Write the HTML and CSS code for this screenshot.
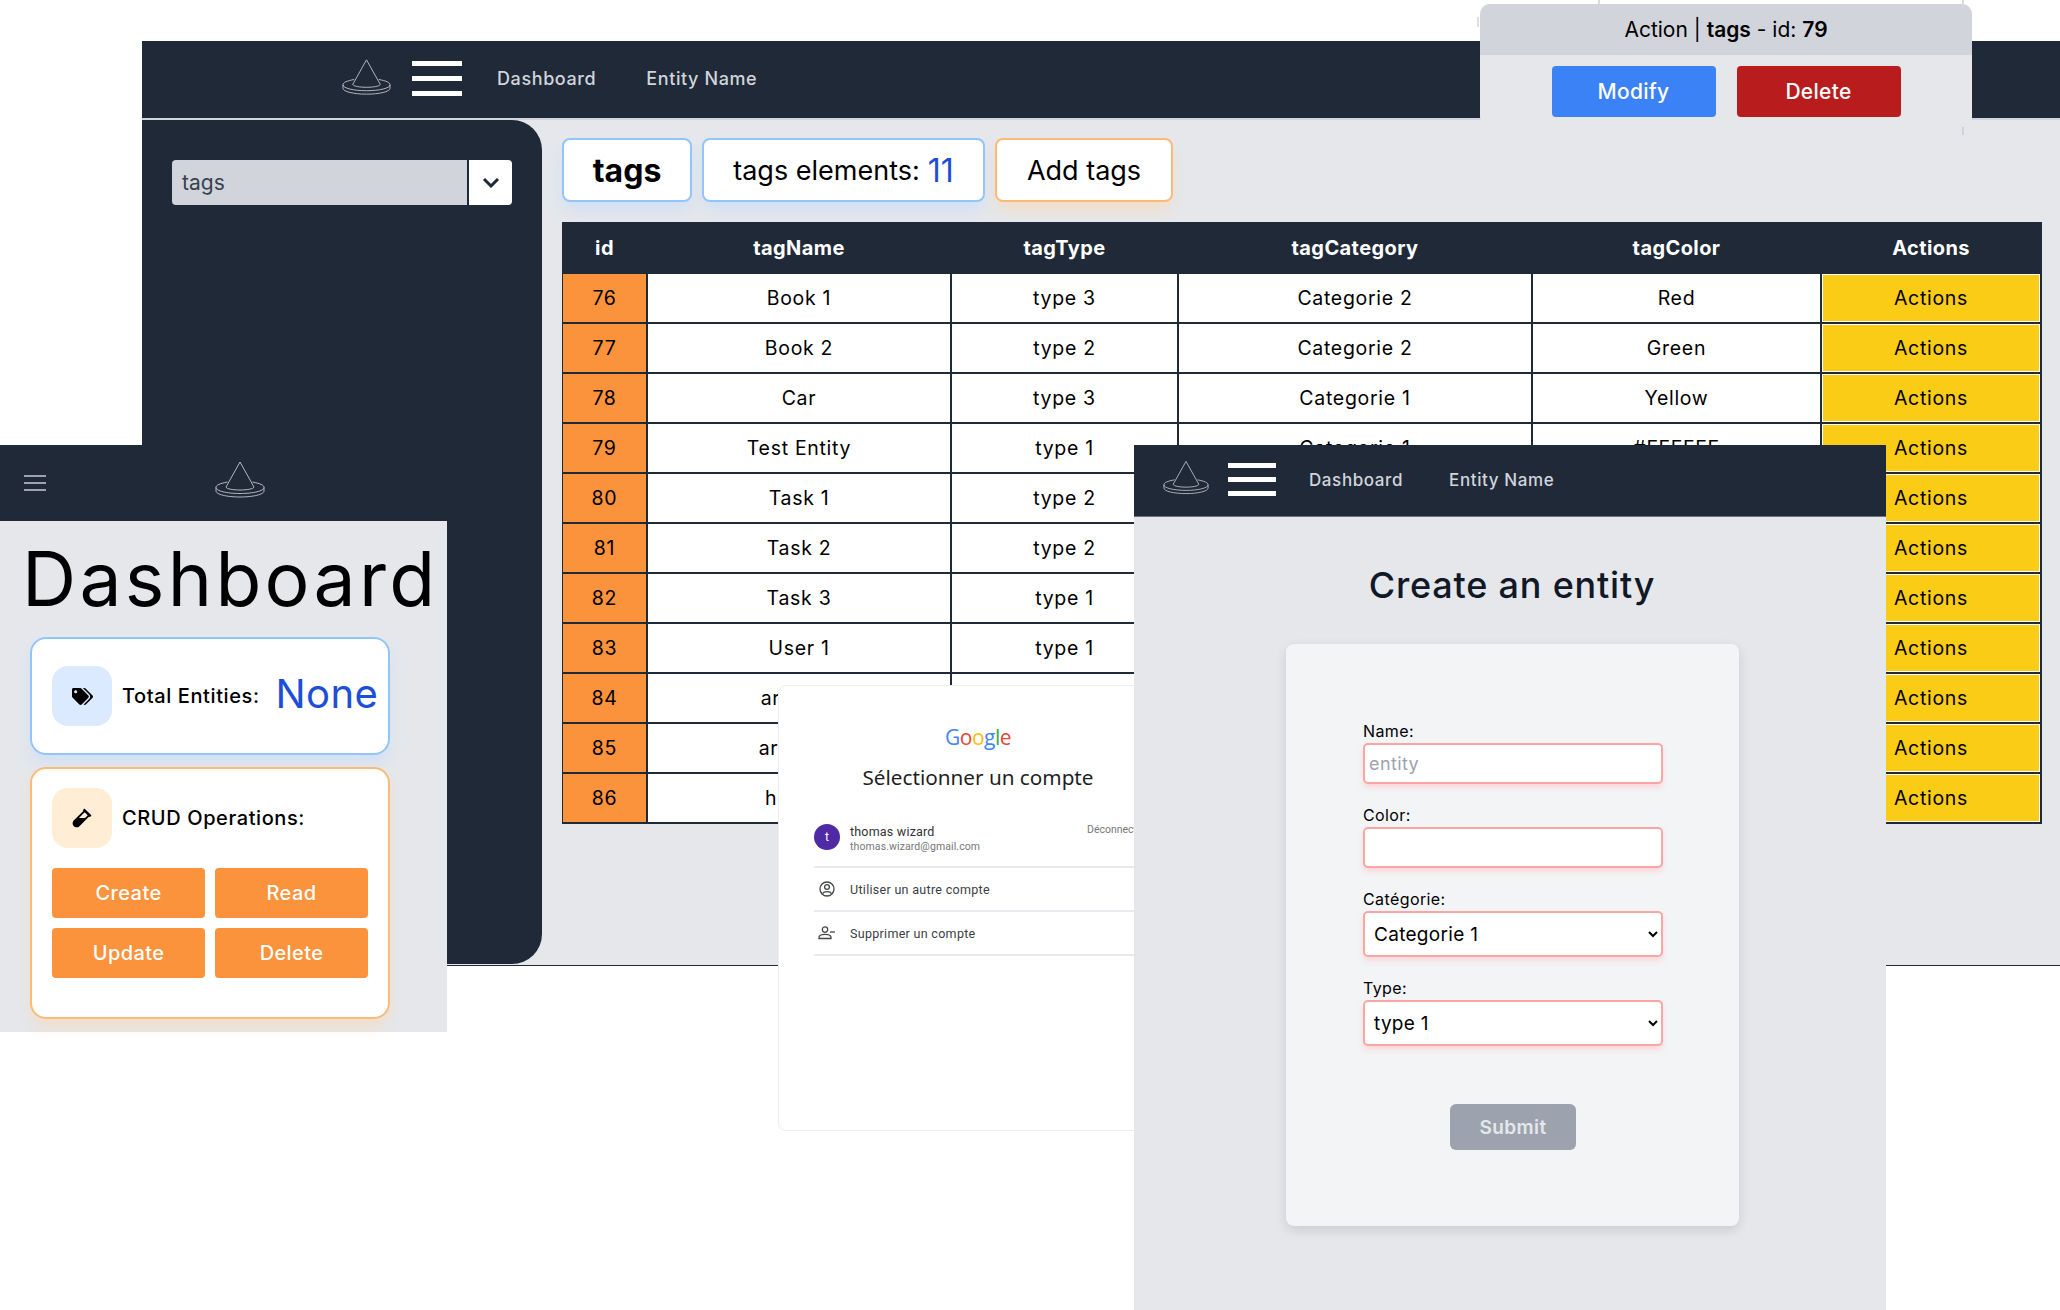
FILE: index.html
```html
<!DOCTYPE html>
<html lang="en">
<head>
<meta charset="UTF-8">
<title>Entity Manager</title>
<link rel="stylesheet" href="styles.css">
</head>
<body>
<svg class="defs" width="0" height="0">
  <symbol id="hat" viewBox="0 0 50 37">
    <g fill="none" stroke="currentColor" stroke-width="0.9">
      <path d="M25 1 L11 26 C12 30 38 30 39 26 Z"/>
      <path d="M12.5 21 C5 22.5 1 24 1 26.5 C1 30 12 32.5 25 32.5 C38 32.5 49 30 49 26.5 C49 24 45 22.5 37.5 21"/>
      <path d="M1 26.5 L1 30 C1 33.5 12 36 25 36 C38 36 49 33.5 49 30 L49 26.5"/>
    </g>
  </symbol>
</svg>

<div class="desk">

  <!-- main table page -->
  <div class="win win-main">
    <div class="nav nav-main">
      <svg class="logo logo-main"><use href="#hat"/></svg>
      <div class="burger burger-main"><span></span><span></span><span></span></div>
      <a class="nav-link nav-link-main">Dashboard</a>
      <a class="nav-link nav-link-main">Entity Name</a>
    </div>
    <div class="main-body">
      <div class="sidebar">
        <div class="side-select">
          <div class="side-select-text">tags</div>
          <div class="side-select-btn">
            <svg width="18" height="11" viewBox="0 0 18 11"><path d="M2 2 L9 9 L16 2" fill="none" stroke="#1f2937" stroke-width="3"/></svg>
          </div>
        </div>
      </div>
      <div class="content">
        <div class="tag-row">
          <div class="pill pill-blue pill-title">tags</div>
          <div class="pill pill-blue pill-count">tags elements: <span class="blue-num">11</span></div>
          <div class="pill pill-orange pill-add">Add tags</div>
        </div>
        <table class="data">
          <thead>
            <tr><th class="c-id">id</th><th class="c-name">tagName</th><th class="c-type">tagType</th><th class="c-cat">tagCategory</th><th class="c-color">tagColor</th><th class="c-act">Actions</th></tr>
          </thead>
          <tbody>
            <tr><td class="id">76</td><td>Book 1</td><td>type 3</td><td>Categorie 2</td><td>Red</td><td class="act">Actions</td></tr>
            <tr><td class="id">77</td><td>Book 2</td><td>type 2</td><td>Categorie 2</td><td>Green</td><td class="act">Actions</td></tr>
            <tr><td class="id">78</td><td>Car</td><td>type 3</td><td>Categorie 1</td><td>Yellow</td><td class="act">Actions</td></tr>
            <tr><td class="id">79</td><td>Test Entity</td><td>type 1</td><td>Categorie 1</td><td>#FFFFFF</td><td class="act">Actions</td></tr>
            <tr><td class="id">80</td><td>Task 1</td><td>type 2</td><td>Categorie 1</td><td>Red</td><td class="act">Actions</td></tr>
            <tr><td class="id">81</td><td>Task 2</td><td>type 2</td><td>Categorie 2</td><td>Green</td><td class="act">Actions</td></tr>
            <tr><td class="id">82</td><td>Task 3</td><td>type 1</td><td>Categorie 2</td><td>Yellow</td><td class="act">Actions</td></tr>
            <tr><td class="id">83</td><td>User 1</td><td>type 1</td><td>Categorie 1</td><td>Red</td><td class="act">Actions</td></tr>
            <tr><td class="id">84</td><td>article 1</td><td>type 1</td><td>Categorie 1</td><td>Red</td><td class="act">Actions</td></tr>
            <tr><td class="id">85</td><td>article 2</td><td>type 1</td><td>Categorie 1</td><td>Red</td><td class="act">Actions</td></tr>
            <tr><td class="id">86</td><td>hotel 3</td><td>type 1</td><td>Categorie 1</td><td>Red</td><td class="act">Actions</td></tr>
          </tbody>
        </table>
      </div>
    </div>
  </div>

  <!-- action popup -->
  <div class="win win-popup">
    <div class="popup-head">Action | <b>tags</b> - id: <b>79</b></div>
    <div class="popup-btns">
      <button class="popup-btn btn-blue">Modify</button>
      <button class="popup-btn btn-red">Delete</button>
    </div>
  </div>
  <span class="tick tick-a"></span>
  <span class="tick tick-b"></span>
  <span class="tick tick-c"></span>
  <span class="tick tick-d"></span>

  <!-- mobile dashboard -->
  <div class="win win-mobile">
    <div class="nav nav-mobile">
      <div class="burger burger-small"><span></span><span></span><span></span></div>
      <svg class="logo logo-mobile"><use href="#hat"/></svg>
    </div>
    <h1 class="dash-title">Dashboard</h1>
    <div class="card card-blue">
      <div class="card-line">
        <div class="icon-box icon-blue">
          <svg width="21" height="17" viewBox="0 0 640 512"><path d="M497.941 225.941L286.059 14.059A48 48 0 0 0 252.118 0H48C21.49 0 0 21.49 0 48v204.118a48 48 0 0 0 14.059 33.941l211.882 211.882c18.744 18.745 49.136 18.746 67.882 0l204.118-204.118c18.745-18.745 18.745-49.137 0-67.882zM112 160c-26.51 0-48-21.49-48-48s21.49-48 48-48 48 21.49 48 48-21.49 48-48 48zm513.941 133.823L421.823 497.941c-18.745 18.745-49.137 18.745-67.882 0l-.36-.36L527.64 323.522c16.999-16.999 26.36-39.6 26.36-63.64s-9.362-46.641-26.36-63.64L331.397 0h48.721a48 48 0 0 1 33.941 14.059l211.882 211.882c18.745 18.745 18.745 49.137 0 67.882z"/></svg>
        </div>
        <span class="card-label">Total Entities:</span>
        <span class="card-none">None</span>
      </div>
    </div>
    <div class="card card-orange">
      <div class="card-line">
        <div class="icon-box icon-orange">
          <svg width="20" height="20" viewBox="0 0 480 512"><path d="M477.7 186.1L309.5 18.3c-3.1-3.1-8.2-3.1-11.3 0l-34 33.9c-3.1 3.1-3.1 8.2 0 11.3l11.2 11.1L33 316.5c-38.8 38.7-45.1 102-9.4 143.5 20.6 24 49.5 36 78.4 35.9 26.4 0 52.8-10 72.9-30.1l246.3-245.7 11.2 11.1c3.1 3.1 8.2 3.1 11.3 0l34-33.9c3-3 3-8.1-.1-11.2zM318 256H161l148-147.7 78.5 78.3L318 256z"/></svg>
        </div>
        <span class="card-label">CRUD Operations:</span>
      </div>
      <div class="crud-grid">
        <button class="crud-btn">Create</button>
        <button class="crud-btn">Read</button>
        <button class="crud-btn">Update</button>
        <button class="crud-btn">Delete</button>
      </div>
    </div>
  </div>

  <!-- google account picker -->
  <div class="win win-google">
    <div class="g-logo"><span class="g-b">G</span><span class="g-r">o</span><span class="g-y">o</span><span class="g-b">g</span><span class="g-g">l</span><span class="g-r">e</span></div>
    <div class="g-title">Sélectionner un compte</div>
    <div class="g-list">
      <div class="g-row g-row-user">
        <div class="g-avatar">t</div>
        <div class="g-user">
          <div class="g-name">thomas wizard</div>
          <div class="g-mail">thomas.wizard@gmail.com</div>
        </div>
        <div class="g-out">Déconnecté</div>
      </div>
      <div class="g-row">
        <svg class="g-icon" width="16" height="16" viewBox="0 0 16 16"><g fill="none" stroke="#444746" stroke-width="1.3"><circle cx="8" cy="8" r="7"/><circle cx="8" cy="6" r="2.4"/><path d="M3.4 12.6 C5 10 11 10 12.6 12.6"/></g></svg>
        <span class="g-text">Utiliser un autre compte</span>
      </div>
      <div class="g-row">
        <svg class="g-icon" width="18" height="14" viewBox="0 0 18 14"><g fill="none" stroke="#444746" stroke-width="1.3"><circle cx="7" cy="3.6" r="2.7"/><path d="M1 12.5 V11.5 C1 9 4 8.4 7 8.4 C10 8.4 13 9 13 11.5 V12.5 Z"/><path d="M12 6 H17"/></g></svg>
        <span class="g-text">Supprimer un compte</span>
      </div>
    </div>
  </div>

  <!-- create form -->
  <div class="win win-create">
    <div class="nav nav-create">
      <svg class="logo logo-create"><use href="#hat"/></svg>
      <div class="burger burger-create"><span></span><span></span><span></span></div>
      <a class="nav-link nav-link-create">Dashboard</a>
      <a class="nav-link nav-link-create">Entity Name</a>
    </div>
    <h2 class="create-title">Create an entity</h2>
    <div class="form-card">
      <form class="entity-form">
        <label class="f-label">Name:</label>
        <input class="f-input" type="text" placeholder="entity">
        <label class="f-label">Color:</label>
        <input class="f-input" type="text">
        <label class="f-label">Catégorie:</label>
        <select class="f-select"><option>Categorie 1</option></select>
        <label class="f-label">Type:</label>
        <select class="f-select"><option>type 1</option></select>
        <button class="f-submit" type="button">Submit</button>
      </form>
    </div>
  </div>

</div>
</body>
</html>
```

FILE: styles.css
```css
* {
  box-sizing: border-box;
}

html, body {
  margin: 0;
  padding: 0;
  background-color: #fff;
}

body {
  font-family: Inter, "Noto Sans", sans-serif;
  color: #000;
}

.defs {
  position: absolute;
}

.desk {
  position: relative;
  width: 2060px;
  height: 1310px;
  overflow: hidden;
  background-color: #fff;
}

.win {
  position: absolute;
}

/* shared nav bits */
.nav {
  display: flex;
  align-items: center;
  background-color: #1f2937;
}

.logo {
  display: block;
  color: #c4c8ce;
}

.burger {
  display: flex;
  flex-direction: column;
  justify-content: space-between;
}

.burger span {
  display: block;
  background-color: #fff;
}

.nav-link {
  color: #d1d5db;
  font-weight: 500;
  letter-spacing: 0.6px;
}

/* main page */
.win-main {
  left: 142px;
  top: 41px;
  width: 1918px;
  height: 925px;
  background-color: #e5e7eb;
  border-bottom: 1px solid #1f2937;
}

.nav-main {
  height: 79px;
  padding-left: 200px;
  border-bottom: 2px solid #d1d5db;
}

.logo-main {
  width: 49px;
  height: 38px;
  margin-right: 21px;
  margin-bottom: 6px;
}

.burger-main {
  width: 50px;
  height: 35px;
  margin-right: 35px;
  margin-bottom: 2px;
}

.burger-main span {
  height: 5px;
}

.nav-link-main {
  font-size: 18px;
  margin-right: 50px;
  margin-bottom: 2px;
}

.main-body {
  display: flex;
}

.sidebar {
  width: 400px;
  height: 844px;
  padding: 40px 30px;
  background-color: #1f2937;
  border-radius: 0 30px 30px 0;
}

.side-select {
  display: flex;
  height: 45px;
  border-radius: 4px;
  overflow: hidden;
}

.side-select-text {
  flex: 1;
  padding: 0 0 0 10px;
  background-color: #d1d5db;
  color: #374151;
  font-size: 21px;
  line-height: 45px;
}

.side-select-btn {
  display: flex;
  align-items: center;
  justify-content: center;
  width: 43px;
  margin-left: 2px;
  background-color: #fff;
}

.content {
  padding: 18px 0 0 20px;
}

.tag-row {
  display: flex;
  gap: 10px;
  height: 64px;
  margin-bottom: 20px;
}

.pill {
  display: flex;
  align-items: center;
  justify-content: center;
  height: 64px;
  background-color: #fff;
  border-radius: 8px;
  border: 2px solid #93c5fd;
  font-size: 27px;
}

.pill-blue {
  box-shadow: 0 10px 15px -3px rgba(191, 219, 254, 0.6);
}

.pill-orange {
  border-color: #fdba74;
  box-shadow: 0 10px 15px -3px rgba(254, 215, 170, 0.6);
}

.pill-title {
  width: 130px;
  font-size: 32px;
  font-weight: 700;
}

.pill-count {
  width: 283px;
}

.blue-num {
  margin-left: 8px;
  color: #1d4ed8;
  font-size: 32px;
}

.pill-add {
  width: 178px;
}

/* clip-path trims the table's outer spacing to a 1px edge on the left */
.data {
  margin-left: -1px;
  table-layout: fixed;
  width: 1481px;
  border-collapse: separate;
  border-spacing: 2px;
  background-color: #1f2937;
  clip-path: inset(0 0 0 1px);
  font-size: 19.5px;
  letter-spacing: 0.7px;
  text-align: center;
}

.data th {
  height: 48px;
  padding: 0;
  color: #fff;
  font-size: 20px;
  font-weight: 700;
  letter-spacing: 0.4px;
}

.data td {
  height: 48px;
  padding: 0;
  background-color: #fff;
}

.c-id { width: 83px; }
.c-name { width: 302px; }
.c-type { width: 225px; }
.c-cat { width: 352px; }
.c-color { width: 287px; }
.c-act { width: 218px; }

.data td.id {
  background-color: #fb923c;
}

.data td.act {
  background-color: #facc15;
  border: 1px solid #fff;
}

/* popup */
.win-popup {
  left: 1480px;
  top: 4px;
  width: 492px;
  height: 123px;
  background-color: #e5e7eb;
  border-radius: 10px;
  overflow: hidden;
}

.popup-head {
  height: 51px;
  background-color: #d1d5db;
  font-size: 21px;
  line-height: 51px;
  text-align: center;
}

.popup-head b {
  font-weight: 600;
}

.popup-btns {
  display: flex;
  justify-content: center;
  gap: 21px;
  padding-top: 11px;
}

.popup-btn {
  width: 164px;
  height: 51px;
  border: 0;
  border-radius: 4px;
  color: #fff;
  font-family: inherit;
  font-size: 21px;
  font-weight: 500;
  letter-spacing: 0.3px;
}

.btn-blue { background-color: #3b82f6; }
.btn-red { background-color: #b91c1c; }

/* leftovers of the cut-out around the popup */
.tick {
  position: absolute;
  width: 2px;
  background-color: #dcdee2;
}

.tick-a { left: 1598px; top: 0; height: 4px; }
.tick-b { left: 1962px; top: 0; height: 4px; }
.tick-c { left: 1962px; top: 127px; height: 8px; background-color: #cfd2d7; }
.tick-d { left: 1477px; top: 17px; height: 10px; }

/* mobile dashboard */
.win-mobile {
  left: 0;
  top: 445px;
  width: 447px;
  height: 587px;
  background-color: #e5e7eb;
}

.nav-mobile {
  height: 76px;
  padding-left: 24px;
}

.burger-small {
  width: 22px;
  height: 16px;
  margin-right: 169px;
}

.burger-small span {
  height: 2px;
  background-color: #9ca3af;
}

.logo-mobile {
  width: 50px;
  height: 37px;
  margin-bottom: 7px;
}

.dash-title {
  margin: 0;
  padding: 13px 0 0 22px;
  height: 116px;
  font-size: 75px;
  font-weight: 400;
  letter-spacing: 3.3px;
  line-height: 90px;
  white-space: nowrap;
}

.card {
  width: 360px;
  margin-left: 30px;
  background-color: #fff;
  border-radius: 16px;
  border: 2px solid #93c5fd;
  padding: 0 20px;
}

.card-blue {
  display: flex;
  align-items: center;
  height: 118px;
  margin-bottom: 12px;
  box-shadow: 0 10px 15px -3px rgba(191, 219, 254, 0.6);
}

.card-orange {
  height: 252px;
  padding-top: 19px;
  border-color: #fdba74;
  box-shadow: 0 10px 15px -3px rgba(254, 215, 170, 0.6);
}

.card-line {
  display: flex;
  align-items: center;
}

.icon-box {
  display: flex;
  flex-shrink: 0;
  align-items: center;
  justify-content: center;
  width: 60px;
  height: 60px;
  margin-right: 10px;
  border-radius: 16px;
}

.icon-blue { background-color: #dbeafe; }
.icon-orange { background-color: #ffedd5; }

.card-label {
  font-size: 20px;
  font-weight: 500;
  letter-spacing: 0.6px;
  white-space: nowrap;
}

.card-none {
  margin: 0 0 4px 16px;
  color: #1d4ed8;
  font-size: 40px;
  letter-spacing: 0.4px;
  line-height: 1;
}

.crud-grid {
  display: grid;
  grid-template-columns: 153px 153px;
  grid-auto-rows: 50px;
  gap: 10px;
  margin-top: 20px;
}

.crud-btn {
  border: 0;
  border-radius: 4px;
  background-color: #fb923c;
  color: #fff;
  font-family: inherit;
  font-size: 20px;
  font-weight: 500;
  letter-spacing: 0.4px;
}

/* google picker */
.win-google {
  left: 778px;
  top: 685px;
  width: 400px;
  height: 446px;
  background-color: #fff;
  border: 1px solid #eceef0;
  border-radius: 8px;
  font-family: Roboto, sans-serif;
}

.g-logo {
  padding-top: 38px;
  height: 64px;
  font-family: "Open Sans", sans-serif;
  font-size: 21px;
  letter-spacing: -0.5px;
  line-height: 26px;
  text-align: center;
}

.g-b { color: #4285f4; }
.g-r { color: #ea4335; }
.g-y { color: #fbbc05; }
.g-g { color: #34a853; }

.g-title {
  padding-top: 13px;
  height: 44px;
  color: #1f1f1f;
  font-family: "Noto Sans", sans-serif;
  font-size: 20.7px;
  line-height: 28px;
  text-align: center;
}

.g-list {
  margin: 14px 0 0 35px;
  width: 330px;
}

.g-row {
  display: flex;
  align-items: center;
  height: 44px;
  border-bottom: 2px solid #e8eaed;
}

.g-row-user {
  position: relative;
  height: 60px;
}

.g-avatar {
  width: 26px;
  height: 26px;
  margin-right: 10px;
  border-radius: 50%;
  background-color: #4e2aa5;
  color: #fff;
  font-size: 12px;
  line-height: 26px;
  text-align: center;
}

.g-user {
  padding-top: 3px;
}

.g-name {
  color: #333;
  font-size: 12.5px;
  letter-spacing: 0.2px;
  line-height: 15px;
}

.g-mail {
  color: #777;
  font-size: 10.5px;
  letter-spacing: 0.1px;
  line-height: 15px;
}

.g-out {
  position: absolute;
  left: 273px;
  top: 15px;
  color: #777;
  font-size: 10.5px;
}

.g-icon {
  width: 26px;
  margin-right: 10px;
}

.g-text {
  color: #3c4043;
  font-size: 12.5px;
  letter-spacing: 0.3px;
}

/* create form */
.win-create {
  left: 1134px;
  top: 445px;
  width: 752px;
  height: 865px;
  background-color: #e5e7eb;
}

.nav-create {
  height: 72px;
  padding-left: 29px;
  border-bottom: 1px solid #6b7280;
}

.logo-create {
  width: 46px;
  height: 35px;
  margin-right: 19px;
  margin-bottom: 6px;
}

.burger-create {
  width: 48px;
  height: 33px;
  margin-right: 33px;
  margin-bottom: 3px;
}

.burger-create span {
  height: 5px;
}

.nav-link-create {
  font-size: 17px;
  margin-right: 46px;
  margin-bottom: 2px;
}

.create-title {
  margin: 0;
  padding: 46px 0 0 4px;
  height: 127px;
  color: #111827;
  font-size: 36px;
  font-weight: 500;
  letter-spacing: 0.8px;
  line-height: 44px;
  text-align: center;
}

.form-card {
  width: 453px;
  height: 582px;
  margin-left: 152px;
  padding: 77px 0 0 77px;
  background-color: #f3f4f6;
  border-radius: 8px;
  box-shadow: 0 4px 12px rgba(0, 0, 0, 0.12);
}

.entity-form {
  display: flex;
  flex-direction: column;
  width: 300px;
}

.f-label {
  height: 22px;
  font-size: 16px;
  letter-spacing: 0.4px;
  line-height: 20px;
}

.f-input, .f-select {
  width: 300px;
  background-color: #fff;
  border: 2px solid #fca5a5;
  border-radius: 5px;
  font-family: inherit;
  box-shadow: 0 4px 6px -1px rgba(254, 202, 202, 0.8);
}

.f-input {
  height: 41px;
  margin-bottom: 21px;
  padding: 0 4px;
  font-size: 18px;
  letter-spacing: 0.4px;
}

.f-input::placeholder {
  color: #9ca3af;
}

.f-select {
  height: 46px;
  margin-bottom: 21px;
  padding: 0 5px;
  color: #000;
  font-size: 19px;
  letter-spacing: 0.3px;
}

.f-submit {
  align-self: center;
  width: 126px;
  height: 46px;
  margin-top: 37px;
  border: 0;
  border-radius: 6px;
  background-color: #9ca3af;
  color: #e5e7eb;
  font-family: inherit;
  font-size: 19px;
  font-weight: 600;
  letter-spacing: 0.4px;
}
```
